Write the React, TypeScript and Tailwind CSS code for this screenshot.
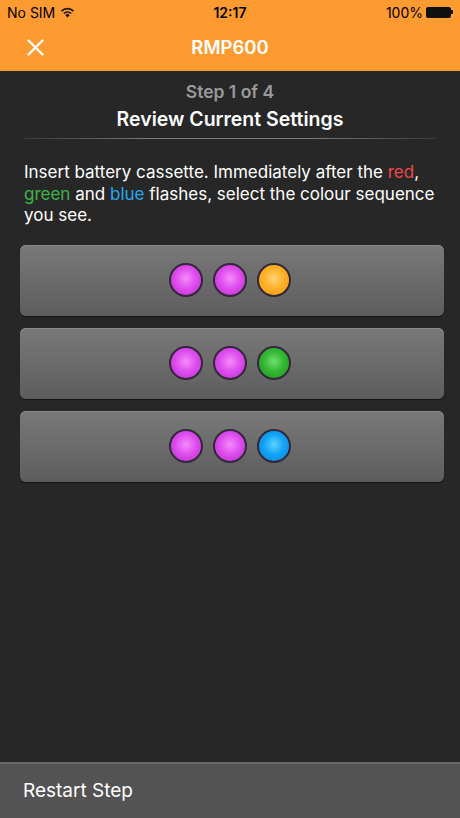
import React from 'react';

// Colour sequences shown on the option buttons
const SEQUENCES: string[][] = [
  ['magenta', 'magenta', 'orange'],
  ['magenta', 'magenta', 'green'],
  ['magenta', 'magenta', 'blue'],
];

const LED_STYLES: Record<string, string> = {
  magenta: 'bg-[radial-gradient(circle_at_50%_45%,#f58cf7_0%,#df4ff0_45%,#b72bc9_100%)]',
  orange: 'bg-[radial-gradient(circle_at_50%_45%,#ffd27a_0%,#ffb128_45%,#f29a0c_100%)]',
  green: 'bg-[radial-gradient(circle_at_50%_45%,#6fe06f_0%,#34b934_45%,#1f8f22_100%)]',
  blue: 'bg-[radial-gradient(circle_at_50%_45%,#5fd0ff_0%,#12a4f6_45%,#0a7fd4_100%)]',
};

function Led({ color }: { color: string }) {
  return (
    <div
      className={`w-[34px] h-[34px] rounded-full border-2 border-[#33283a] ${LED_STYLES[color]}`}
    />
  );
}

function StatusBar() {
  return (
    <div className="h-[24px] flex items-center justify-between px-[7px] text-black text-[14px]">
      <div className="flex items-center gap-[5px] w-[120px]">
        <span>No SIM</span>
        <svg width="15" height="11" viewBox="0 0 15 11">
          <path d="M7.5 10.5 L5.3 8.1 A3.2 3.2 0 0 1 9.7 8.1 Z" fill="#111" />
          <path d="M3.8 6.5 A5.3 5.3 0 0 1 11.2 6.5" stroke="#111" strokeWidth="1.6" fill="none" />
          <path d="M1.5 4.1 A8.5 8.5 0 0 1 13.5 4.1" stroke="#111" strokeWidth="1.6" fill="none" />
        </svg>
      </div>
      <span className="font-semibold">12:17</span>
      <div className="flex items-center justify-end gap-[3px] w-[120px]">
        <span>100%</span>
        <div className="flex items-center">
          <div className="w-[25px] h-[11px] rounded-[2px] bg-[#111]" />
          <div className="w-[2px] h-[4px] bg-[#111] rounded-r-[1px]" />
        </div>
      </div>
    </div>
  );
}

export default function App() {
  return (
    <div
      className="w-[460px] h-[818px] flex flex-col bg-[#272727] overflow-hidden"
      style={{ fontFamily: 'Inter, "Liberation Sans", Arial, sans-serif' }}
    >
      {/* Header */}
      <div className="bg-[#fd9a30]">
        <StatusBar />
        <div className="h-[47px] flex items-center relative">
          <svg className="absolute left-[27px]" width="17" height="17" viewBox="0 0 17 17">
            <path d="M1.5 1.5 L15.5 15.5 M15.5 1.5 L1.5 15.5" stroke="#fff" strokeWidth="2.4" strokeLinecap="round" />
          </svg>
          <h1 className="w-full text-center text-white text-[18.5px] font-semibold">RMP600</h1>
        </div>
      </div>

      {/* Body */}
      <div className="flex-1 flex flex-col pl-[20px] pr-[16px]">
        <div className="text-center pt-[10px] pr-[4px]">
          <p className="text-[#9a9a9a] text-[17.5px] font-semibold leading-[22px]">Step 1 of 4</p>
          <h2 className="text-white text-[19.5px] font-semibold leading-[24px] mt-[4px]">
            Review Current Settings
          </h2>
        </div>
        <div className="ml-[4px] mr-[8px] mt-[7px] h-[1px] bg-[linear-gradient(to_right,#3a3a3a,#7a7a7a_30%,#7a7a7a_70%,#3a3a3a)]" />

        <p className="text-white text-[17px] leading-[21.5px] mt-[23px] pl-[4px] pr-[8px]">
          Insert battery cassette. Immediately after the{' '}
          <span className="inline-block text-[#f0474a]">red</span>,{' '}
          <span className="inline-block text-[#3bb54a]">green</span> and{' '}
          <span className="inline-block text-[#2aa6f0]">blue</span> flashes, select the colour sequence you see.
        </p>

        <div className="flex flex-col gap-[12px] mt-[18px]">
          {SEQUENCES.map((seq, i) => (
            <button
              key={i}
              className="h-[71px] rounded-[6px] bg-[linear-gradient(to_bottom,#797979,#5d5d5d)] shadow-[inset_0_1px_0_#8a8a8a,0_1px_1px_#151515] flex items-center justify-center gap-[10px] pr-[4px]"
            >
              {seq.map((c, j) => (
                <Led key={j} color={c} />
              ))}
            </button>
          ))}
        </div>
      </div>

      {/* Footer */}
      <div className="h-[56px] bg-[#535353] border-t-2 border-[#6a6a6a] flex items-center px-[23px]">
        <span className="text-white text-[19px]">Restart Step</span>
      </div>
    </div>
  );
}
